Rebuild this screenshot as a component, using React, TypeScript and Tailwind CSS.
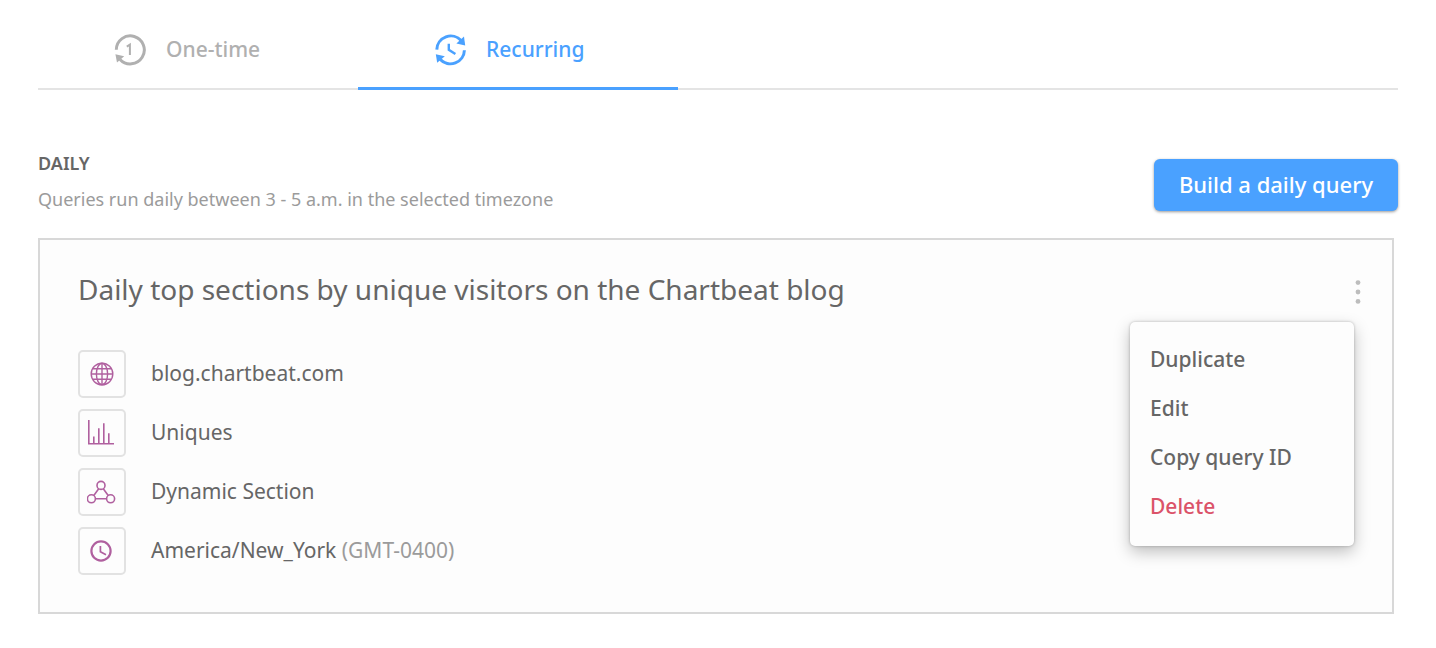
import { useState, type ReactNode } from "react";

type Tab = "one-time" | "recurring";

function OneTimeIcon() {
  return (
    <svg width="32" height="32" viewBox="0 0 32 32" fill="none" aria-hidden="true">
      <path d="M2.3 15.7A14 14 0 1 1 6 25.4" stroke="currentColor" strokeWidth="3" />
      <path d="M1.4 20.2 10.2 22.2 3 28.4Z" fill="currentColor" />
      <path d="M12.8 12.6 15.9 10.6V21" stroke="currentColor" strokeWidth="2" />
    </svg>
  );
}

function RecurringIcon() {
  return (
    <svg width="32" height="32" viewBox="0 0 32 32" fill="none" aria-hidden="true">
      <path d="M2.8 15.6A14 14 0 0 1 27.2 6.6" stroke="currentColor" strokeWidth="3" />
      <path d="M30.4 16.2A14 14 0 0 1 6.2 25.4" stroke="currentColor" strokeWidth="3" />
      <path d="M30 2.6 31.2 11.6 22.4 9.6Z" fill="currentColor" />
      <path d="M1.8 20.2 10.8 22.2 3.2 28.8Z" fill="currentColor" />
      <path d="M14.8 9.8V15.8L21.4 20" stroke="currentColor" strokeWidth="2.4" />
    </svg>
  );
}

function GlobeIcon() {
  return (
    <svg width="24" height="24" viewBox="0 0 24 24" fill="none" stroke="currentColor" strokeWidth="1.4" aria-hidden="true">
      <circle cx="12" cy="12" r="10.8" />
      <ellipse cx="12" cy="12" rx="5.6" ry="10.8" />
      <path d="M12 1.2V22.8M1.2 12H22.8M3 6.8H21M3 17.2H21" />
    </svg>
  );
}

function BarsIcon() {
  return (
    <svg width="28" height="28" viewBox="0 0 28 28" fill="none" stroke="currentColor" strokeWidth="1.6" aria-hidden="true">
      <path d="M0.8 1V24.8H26" />
      <path d="M5.8 24V17.5M10.8 24V9.2M15.8 24V4.2M20.8 24V14.2" />
    </svg>
  );
}

function NodesIcon() {
  return (
    <svg width="30" height="30" viewBox="0 0 30 30" fill="none" stroke="currentColor" strokeWidth="1.6" aria-hidden="true">
      <circle cx="14" cy="8.4" r="4" />
      <circle cx="4.4" cy="21.8" r="4" />
      <circle cx="23.6" cy="21.8" r="4" />
      <path d="M11.7 11.8 6.8 18.4M16.3 11.8 21.2 18.4M8.4 21.8H19.6" />
    </svg>
  );
}

function ClockIcon() {
  return (
    <svg width="24" height="24" viewBox="0 0 24 24" fill="none" stroke="currentColor" aria-hidden="true">
      <circle cx="11" cy="12" r="9.6" strokeWidth="2.2" />
      <path d="M10.4 7V12.8L16 15.8" strokeWidth="1.7" />
    </svg>
  );
}

const details: { icon: ReactNode; text: string; note?: string }[] = [
  { icon: <GlobeIcon />, text: "blog.chartbeat.com" },
  { icon: <BarsIcon />, text: "Uniques" },
  { icon: <NodesIcon />, text: "Dynamic Section" },
  { icon: <ClockIcon />, text: "America/New_York", note: "(GMT-0400)" },
];

const actions = ["Duplicate", "Edit", "Copy query ID", "Delete"];

const tabs: { id: Tab; label: string; icon: ReactNode }[] = [
  { id: "one-time", label: "One-time", icon: <OneTimeIcon /> },
  { id: "recurring", label: "Recurring", icon: <RecurringIcon /> },
];

export default function App() {
  const [tab, setTab] = useState<Tab>("recurring");
  const [menuOpen, setMenuOpen] = useState(true);

  return (
    <main className="bg-white px-[38px] pb-8 font-['Noto_Sans',sans-serif] text-[#666]">
      {/* Tabs */}
      <div role="tablist" className="flex h-[90px] border-b-2 border-[#e4e4e4]">
        {tabs.map((t) => (
          <button
            key={t.id}
            type="button"
            role="tab"
            aria-selected={tab === t.id}
            onClick={() => setTab(t.id)}
            className={`-mb-0.5 flex w-80 items-center gap-5 border-b-[3px] pt-3 pl-[76px] text-[21px] font-medium ${
              tab === t.id
                ? "border-[#4aa1ff] text-[#4aa1ff]"
                : "border-transparent text-[#b0b0b0]"
            }`}
          >
            {t.icon}
            {t.label}
          </button>
        ))}
      </div>

      {/* Section heading */}
      <div className="mt-[59px] flex items-center justify-between">
        <div>
          <h2 className="text-lg leading-7 font-semibold">DAILY</h2>
          <p className="mt-2 text-lg leading-7 text-[#9b9b9b]">
            Queries run daily between 3 - 5 a.m. in the selected timezone
          </p>
        </div>
        <button
          type="button"
          className="mt-2 h-[52px] w-[244px] rounded-md bg-[#4aa1ff] pb-0.5 text-[22px] font-medium text-white shadow-[0_1px_3px_rgba(0,0,0,0.4)]"
        >
          Build a daily query
        </button>
      </div>

      {/* Query card */}
      <section className="mt-[25px] mr-1 border-2 border-[#d8d8d8] bg-[#fdfdfd] pt-[29px] pr-7 pb-[37px] pl-[38px]">
        <div className="flex items-start justify-between">
          <h3 className="text-[28px] leading-10">
            Daily top sections by unique visitors on the Chartbeat blog
          </h3>
          <div className="relative">
            <button
              type="button"
              aria-label="Query actions"
              aria-expanded={menuOpen}
              onClick={() => setMenuOpen(!menuOpen)}
              className="flex h-[46px] w-3 items-center justify-center text-[#bdbdbd]"
            >
              <svg width="6" height="26" viewBox="0 0 6 26" fill="currentColor" aria-hidden="true">
                <circle cx="3" cy="3.6" r="2.4" />
                <circle cx="3" cy="13" r="2.4" />
                <circle cx="3" cy="22.4" r="2.4" />
              </svg>
            </button>
            {menuOpen && (
              <div
                role="menu"
                className="absolute top-[53px] right-[10px] w-56 rounded-[5px] bg-[#fdfdfd] pt-[13px] pb-[15px] shadow-[0_6px_16px_rgba(0,0,0,0.25),0_0_3px_rgba(0,0,0,0.25)]"
              >
                {actions.map((a) => (
                  <button
                    key={a}
                    type="button"
                    role="menuitem"
                    className={`block h-[49px] w-full px-5 text-left text-[21px] font-medium ${
                      a === "Delete" ? "text-[#db5369]" : ""
                    }`}
                  >
                    {a}
                  </button>
                ))}
              </div>
            )}
          </div>
        </div>

        <ul className="mt-[35px] flex flex-col gap-[11px]">
          {details.map((d) => (
            <li key={d.text} className="flex items-center gap-[25px] text-[21px]">
              <span className="flex size-12 items-center justify-center rounded-[5px] border-2 border-[#e2e2e2] text-[#b0609f]">
                {d.icon}
              </span>
              <span>
                {d.text}
                {d.note && <span className="text-[#9b9b9b]"> {d.note}</span>}
              </span>
            </li>
          ))}
        </ul>
      </section>
    </main>
  );
}
